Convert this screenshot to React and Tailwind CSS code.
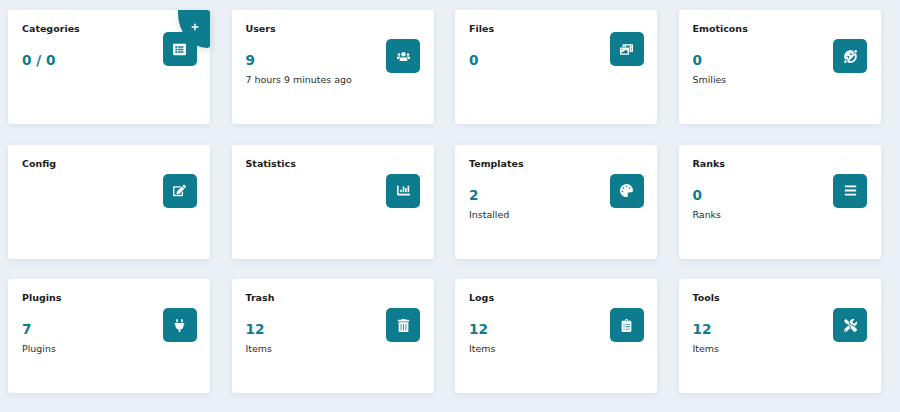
import React from "react";
import { FaListAlt, FaUsers, FaPhotoVideo, FaGrinSquintTears, FaEdit, FaChartBar, FaPalette, FaBars, FaPlug, FaTrashAlt, FaClipboardList, FaTools, FaPlus } from "react-icons/fa";

const cards = [
  { t: "Categories", v: "0 / 0", Icon: FaListAlt, top: "mt-[9px]", add: true },
  { t: "Users", v: "9", s: "7 hours 9 minutes ago", Icon: FaUsers },
  { t: "Files", v: "0", Icon: FaPhotoVideo, top: "mt-[9px]" },
  { t: "Emoticons", v: "0", s: "Smilies", Icon: FaGrinSquintTears },
  { t: "Config", Icon: FaEdit },
  { t: "Statistics", Icon: FaChartBar },
  { t: "Templates", v: "2", s: "Installed", Icon: FaPalette },
  { t: "Ranks", v: "0", s: "Ranks", Icon: FaBars },
  { t: "Plugins", v: "7", s: "Plugins", Icon: FaPlug },
  { t: "Trash", v: "12", s: "Items", Icon: FaTrashAlt },
  { t: "Logs", v: "12", s: "Items", Icon: FaClipboardList },
  { t: "Tools", v: "12", s: "Items", Icon: FaTools },
];

function Card({ t, v, s, Icon, top = "mt-[16px]", add }) {
  return (
    <div className="relative flex justify-between rounded-[3px] bg-white pl-[14px] pr-[13.5px] pt-[13px] shadow-[0_2px_6px_rgba(40,70,120,0.08)]">
      <div className="flex flex-col">
        <div className="text-[9.5px] font-bold leading-[11px] text-[#1c1c1c]">{t}</div>
        {v && <div className="mt-[16px] text-[13.6px] font-bold leading-[20px] text-[#0e7c8f]">{v}</div>}
        {s && <div className="mt-[3px] text-[9.45px] leading-[14px] text-[#2e2e2e]">{s}</div>}
      </div>
      {add && (
        <div className="absolute right-0 top-0 flex h-[38px] w-[32px] items-start justify-end rounded-bl-[100%] rounded-br-[3px] rounded-tr-[3px] bg-[#0e7c8f] pr-[11px] pt-[13px] text-white shadow-[0_3px_8px_rgba(0,0,0,0.12)]">
          <FaPlus className="h-[8px] w-[8px]" />
        </div>
      )}
      <div className={`relative z-10 flex h-[34px] w-[34px] shrink-0 items-center justify-center rounded-[5px] bg-[#0e7c8f] text-white ${top}`}>
        <Icon className="h-[13px] w-auto" />
      </div>
    </div>
  );
}

export default function App() {
  return (
    <div className="min-h-[412px] bg-[#ebf0f7] pl-[8px] pr-[19.3px] pt-[10px] font-['DejaVu_Sans',sans-serif]">
      <div className="grid grid-cols-4 auto-rows-[114px] gap-x-[21.3px] gap-y-[20.5px]">
        {cards.map((c) => <Card key={c.t} {...c} />)}
      </div>
    </div>
  );
}
